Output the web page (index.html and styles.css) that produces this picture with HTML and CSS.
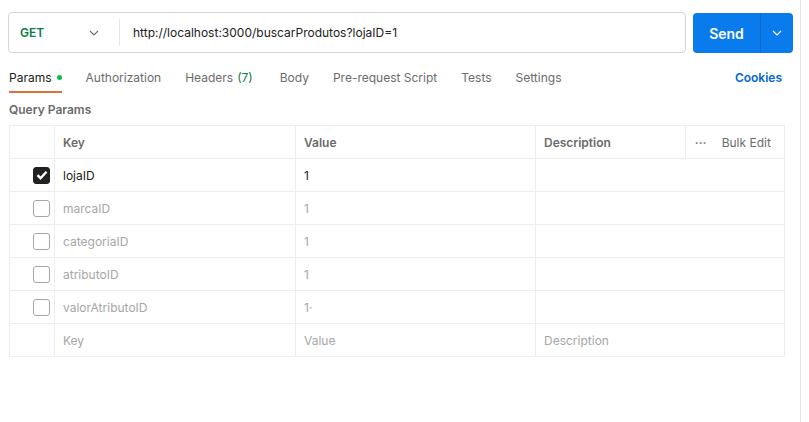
FILE: index.html
```html
<!DOCTYPE html>
<html>
<head>
<meta charset="utf-8">
<link rel="stylesheet" href="styles.css">
</head>
<body>
<div class="page">
  <div class="request-bar">
    <div class="url-box">
      <div class="method">
        <span class="method-name">GET</span>
        <svg class="chev" width="10" height="6" viewBox="0 0 10 6"><path d="M1 1l4 4 4-4" fill="none" stroke="#6b6b6b" stroke-width="1.1"/></svg>
      </div>
      <div class="url">http://localhost:3000/buscarProdutos?lojaID=1</div>
    </div>
    <div class="send">
      <span class="send-label">Send</span>
      <span class="send-more"><svg width="10" height="6" viewBox="0 0 10 6"><path d="M1 1l4 4 4-4" fill="none" stroke="#fff" stroke-width="1.1"/></svg></span>
    </div>
  </div>

  <div class="tabs">
    <div class="tab active">Params<span class="dot"></span></div>
    <div class="tab">Authorization</div>
    <div class="tab headers">Headers <span class="count">(7)</span></div>
    <div class="tab">Body</div>
    <div class="tab">Pre-request Script</div>
    <div class="tab">Tests</div>
    <div class="tab">Settings</div>
    <div class="tab cookies">Cookies</div>
  </div>

  <div class="section-title">Query Params</div>

  <div class="grid">
    <div class="cell"></div>
    <div class="cell head">Key</div>
    <div class="cell head">Value</div>
    <div class="cell head">Description</div>
    <div class="cell bulk"><span class="dots">•••</span>Bulk Edit</div>

    <div class="cell check"><span class="box on"><svg width="12" height="10" viewBox="0 0 12 10"><path d="M1.5 5.2l3 3 6-6.4" fill="none" stroke="#fff" stroke-width="2.4"/></svg></span></div>
    <div class="cell">lojaID</div>
    <div class="cell">1</div>
    <div class="cell span2"></div>

    <div class="cell check"><span class="box"></span></div>
    <div class="cell off">marcaID</div>
    <div class="cell off">1</div>
    <div class="cell span2"></div>

    <div class="cell check"><span class="box"></span></div>
    <div class="cell off">categoriaID</div>
    <div class="cell off">1</div>
    <div class="cell span2"></div>

    <div class="cell check"><span class="box"></span></div>
    <div class="cell off">atributoID</div>
    <div class="cell off">1</div>
    <div class="cell span2"></div>

    <div class="cell check"><span class="box"></span></div>
    <div class="cell off">valorAtributoID</div>
    <div class="cell off">1·</div>
    <div class="cell span2"></div>

    <div class="cell"></div>
    <div class="cell off">Key</div>
    <div class="cell off">Value</div>
    <div class="cell span2 off">Description</div>
  </div>
</div>
</body>
</html>
```

FILE: styles.css
```css
* { box-sizing: border-box; }
html, body { margin: 0; padding: 0; background: #fff; }
body {
  font-family: Inter, "Open Sans", Arial, sans-serif;
  font-size: 12px;
  color: #212121;
}
.page {
  width: 801px;
  height: 422px;
  border-right: 1px solid #e6e6e6;
  padding: 12px 0 0 8px;
}
.request-bar {
  display: flex;
  align-items: flex-start;
  gap: 7px;
}
.url-box {
  width: 678px;
  height: 41px;
  border: 1px solid #d4d4d4;
  border-radius: 4px;
  display: flex;
  align-items: center;
}
.method {
  width: 111px;
  height: 27px;
  display: flex;
  align-items: center;
  justify-content: space-between;
  padding: 0 20px 0 11px;
  border-right: 1px solid #e6e6e6;
}
.method-name {
  font-weight: 600;
  color: #0b7a44;
}
.url {
  padding-left: 13px;
  color: #212121;
}
.send {
  margin-top: 1px;
  width: 100px;
  height: 40px;
  background: #097bed;
  border-radius: 4px;
  display: flex;
  color: #fff;
}
.send-label {
  width: 68px;
  display: flex;
  align-items: center;
  justify-content: center;
  font-weight: 600;
  font-size: 14px;
  border-right: 1px solid #0a6ad0;
}
.send-more {
  flex: 1;
  display: flex;
  align-items: center;
  justify-content: center;
}
.tabs {
  display: flex;
  gap: 24px;
  margin-top: 10px;
  width: 774px;
  padding-left: 1px;
}
.tab {
  height: 30px;
  display: flex;
  align-items: center;
  color: #6b6b6b;
  border-bottom: 2px solid transparent;
  padding-top: 1px;
}
.tab.active {
  color: #212121;
  border-bottom-color: #e0703c;
}
.dot {
  width: 5px;
  height: 5px;
  border-radius: 50%;
  background: #0cbb52;
  margin-left: 5px;
}
.headers { padding-right: 3px; }
.count { color: #0b7a44; margin-left: 4px; }
.cookies {
  margin-left: auto;
  color: #0265d2;
  font-weight: 600;
}
.section-title {
  margin-top: 5px;
  padding-left: 1px;
  font-weight: 600;
  color: #6b6b6b;
  height: 22px;
  display: flex;
  align-items: center;
}
.grid {
  margin-top: 5px;
  margin-left: 1px;
  width: 776px;
  display: grid;
  grid-template-columns: 45px 241px 240px 150px 99px;
  grid-auto-rows: 33px;
  border-top: 1px solid #ededed;
  border-left: 1px solid #ededed;
}
.cell {
  border-right: 1px solid #ededed;
  border-bottom: 1px solid #ededed;
  display: flex;
  align-items: center;
  padding-left: 8px;
}
.head {
  font-weight: 600;
  color: #6b6b6b;
}
.bulk {
  color: #6b6b6b;
  padding-left: 9px;
}
.dots {
  font-size: 6px;
  letter-spacing: 0.5px;
  margin-right: 15px;
  color: #6b6b6b;
}
.span2 { grid-column: span 2; }
.off { color: #a6a6a6; }
.check {
  justify-content: flex-end;
  padding-right: 4px;
}
.box {
  width: 17px;
  height: 17px;
  border: 1px solid #a6a6a6;
  border-radius: 3px;
  display: flex;
  align-items: center;
  justify-content: center;
}
.box.on {
  background: #212121;
  border-color: #212121;
}
```
